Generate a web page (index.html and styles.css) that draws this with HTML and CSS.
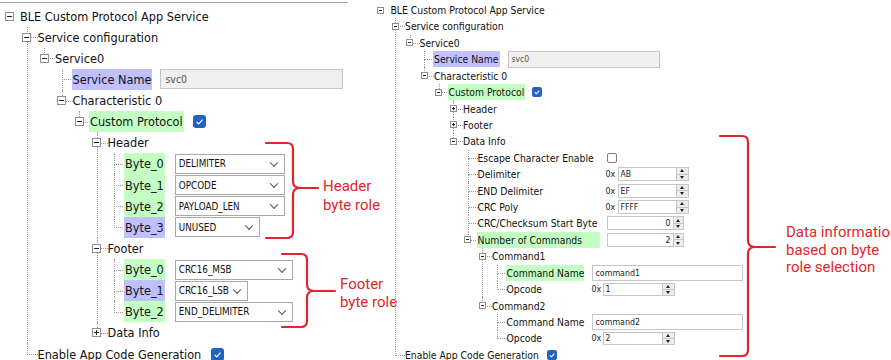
FILE: index.html
```html
<!DOCTYPE html>
<html lang="en">
<head>
<meta charset="utf-8">
<title>BLE Custom Protocol App Service</title>
<link rel="stylesheet" href="styles.css">
</head>
<body>
<main class="canvas">
  <section class="panel pl">
    <div class="topline"></div>
    <ul class="tree">
      <li>
        <div class="row"><span class="tg"></span><span class="lbl">BLE Custom Protocol App Service</span></div>
        <ul>
          <li>
            <div class="row"><span class="tg"></span><span class="lbl">Service configuration</span></div>
            <ul>
              <li>
                <div class="row"><span class="tg"></span><span class="lbl">Service0</span></div>
                <ul>
                  <li><div class="row leaf"><span class="lbl hl-p">Service Name</span><span class="ctl field ro sn">svc0</span></div></li>
                  <li>
                    <div class="row"><span class="tg"></span><span class="lbl">Characteristic 0</span></div>
                    <ul>
                      <li>
                        <div class="row"><span class="tg"></span><span class="lbl hl-g">Custom Protocol</span><svg class="ctl cb" viewBox="0 0 13 13"><rect x="0" y="0" width="13" height="13" rx="3" fill="#2163c0"/><path d="M3.6 6.9 L5.7 8.9 L9.5 4.6" fill="none" stroke="#fff" stroke-width="1.2"/></svg></div>
                        <ul>
                          <li>
                            <div class="row"><span class="tg"></span><span class="lbl">Header</span></div>
                            <ul>
                              <li><div class="row leaf"><span class="lbl hl-g">Byte_0</span><span class="ctl sel w110">DELIMITER</span></div></li>
                              <li><div class="row leaf"><span class="lbl hl-g">Byte_1</span><span class="ctl sel w110">OPCODE</span></div></li>
                              <li><div class="row leaf"><span class="lbl hl-g">Byte_2</span><span class="ctl sel w110">PAYLOAD_LEN</span></div></li>
                              <li><div class="row leaf"><span class="lbl hl-p">Byte_3</span><span class="ctl sel w85">UNUSED</span></div></li>
                            </ul>
                          </li>
                          <li>
                            <div class="row"><span class="tg"></span><span class="lbl">Footer</span></div>
                            <ul>
                              <li><div class="row leaf"><span class="lbl hl-g">Byte_0</span><span class="ctl sel w118">CRC16_MSB</span></div></li>
                              <li><div class="row leaf"><span class="lbl hl-p">Byte_1</span><span class="ctl sel w73">CRC16_LSB</span></div></li>
                              <li><div class="row leaf"><span class="lbl hl-g">Byte_2</span><span class="ctl sel w118">END_DELIMITER</span></div></li>
                            </ul>
                          </li>
                          <li><div class="row"><span class="tg plus"></span><span class="lbl">Data Info</span></div></li>
                        </ul>
                      </li>
                    </ul>
                  </li>
                </ul>
              </li>
            </ul>
          </li>
          <li><div class="row leaf"><span class="lbl">Enable App Code Generation</span><svg class="ctl cb" viewBox="0 0 13 13"><rect x="0" y="0" width="13" height="13" rx="3" fill="#2163c0"/><path d="M3.6 6.9 L5.7 8.9 L9.5 4.6" fill="none" stroke="#fff" stroke-width="1.2"/></svg></div></li>
        </ul>
      </li>
    </ul>
    <svg class="braces" width="370" height="360" viewBox="0 0 370 360">
      <path d="M266 143 H287 Q293 143 293 149 V181 Q293 188 300 188 H318 M300 188 Q293 188 293 195 V232 Q293 238 287 238 H266"/>
      <path d="M282 254 H301 Q307 254 307 260 V284 Q307 291 314 291 H335 M314 291 Q307 291 307 298 V321 Q307 327 301 327 H282"/>
    </svg>
    <p class="note n-head">Header<br>byte role</p>
    <p class="note n-foot">Footer<br>byte role</p>
  </section>

  <section class="panel pr">
    <ul class="tree">
      <li>
        <div class="row"><span class="tg"></span><span class="lbl">BLE Custom Protocol App Service</span></div>
        <ul>
          <li>
            <div class="row"><span class="tg"></span><span class="lbl">Service configuration</span></div>
            <ul>
              <li>
                <div class="row"><span class="tg"></span><span class="lbl">Service0</span></div>
                <ul>
                  <li><div class="row leaf"><span class="lbl hl-p">Service Name</span><span class="ctl field ro sn">svc0</span></div></li>
                  <li>
                    <div class="row"><span class="tg"></span><span class="lbl">Characteristic 0</span></div>
                    <ul>
                      <li>
                        <div class="row"><span class="tg"></span><span class="lbl hl-g">Custom Protocol</span><svg class="ctl cb" viewBox="0 0 13 13"><rect x="0" y="0" width="13" height="13" rx="3" fill="#2163c0"/><path d="M3.6 6.9 L5.7 8.9 L9.5 4.6" fill="none" stroke="#fff" stroke-width="1.4"/></svg></div>
                        <ul>
                          <li><div class="row"><span class="tg plus"></span><span class="lbl">Header</span></div></li>
                          <li><div class="row"><span class="tg plus"></span><span class="lbl">Footer</span></div></li>
                          <li>
                            <div class="row"><span class="tg"></span><span class="lbl">Data Info</span></div>
                            <ul>
                              <li><div class="row leaf"><span class="lbl c1">Escape Character Enable</span><span class="ctl cb off"></span></div></li>
                              <li><div class="row leaf"><span class="lbl c1">Delimiter</span><span class="ctl px">0x</span><span class="spinf hx"><span class="v">AB</span><span class="spin"><i></i><i></i></span></span></div></li>
                              <li><div class="row leaf"><span class="lbl c1">END Delimiter</span><span class="ctl px">0x</span><span class="spinf hx"><span class="v">EF</span><span class="spin"><i></i><i></i></span></span></div></li>
                              <li><div class="row leaf"><span class="lbl c1">CRC Poly</span><span class="ctl px">0x</span><span class="spinf hx"><span class="v">FFFF</span><span class="spin"><i></i><i></i></span></span></div></li>
                              <li><div class="row leaf"><span class="lbl c1">CRC/Checksum Start Byte</span><span class="ctl spinf num"><span class="v">0</span><span class="spin"><i></i><i></i></span></span></div></li>
                              <li>
                                <div class="row"><span class="tg"></span><span class="lbl c1 hl-g">Number of Commands</span><span class="ctl spinf num"><span class="v">2</span><span class="spin"><i></i><i></i></span></span></div>
                                <ul>
                                  <li>
                                    <div class="row"><span class="tg"></span><span class="lbl">Command1</span></div>
                                    <ul>
                                      <li><div class="row leaf"><span class="lbl c2 hl-g">Command Name</span><span class="ctl field cmd">command1</span></div></li>
                                      <li><div class="row leaf"><span class="lbl c2">Opcode</span><span class="ctl px">0x</span><span class="spinf op"><span class="v">1</span><span class="spin"><i></i><i></i></span></span></div></li>
                                    </ul>
                                  </li>
                                  <li>
                                    <div class="row"><span class="tg"></span><span class="lbl">Command2</span></div>
                                    <ul>
                                      <li><div class="row leaf"><span class="lbl c2">Command Name</span><span class="ctl field cmd">command2</span></div></li>
                                      <li><div class="row leaf"><span class="lbl c2">Opcode</span><span class="ctl px">0x</span><span class="spinf op"><span class="v">2</span><span class="spin"><i></i><i></i></span></span></div></li>
                                    </ul>
                                  </li>
                                </ul>
                              </li>
                            </ul>
                          </li>
                        </ul>
                      </li>
                    </ul>
                  </li>
                </ul>
              </li>
            </ul>
          </li>
          <li><div class="row leaf"><span class="lbl">Enable App Code Generation</span><svg class="ctl cb" viewBox="0 0 13 13"><rect x="0" y="0" width="13" height="13" rx="3" fill="#2163c0"/><path d="M3.6 6.9 L5.7 8.9 L9.5 4.6" fill="none" stroke="#fff" stroke-width="1.4"/></svg></div></li>
        </ul>
      </li>
    </ul>
    <svg class="braces" width="521" height="360" viewBox="0 0 521 360">
      <path d="M350 136 H372 Q378 136 378 142 V240 Q378 247 385 247 H405 M385 247 Q378 247 378 254 V350 Q378 356 372 356 H350"/>
    </svg>
    <p class="note n-data">Data information<br>based on byte<br>role selection</p>
  </section>
</main>
</body>
</html>
```

FILE: styles.css
```css
* { box-sizing: border-box; }
html, body { margin: 0; padding: 0; background: #fff; }
body { width: 891px; height: 360px; overflow: hidden; }

.canvas { display: flex; width: 891px; height: 360px; position: relative; overflow: hidden; }

.panel {
  position: relative;
  font-family: "DejaVu Sans Condensed", "DejaVu Sans", sans-serif;
  color: #111;
}
.pl {
  width: 370px; flex: none;
  --rh: 21.125px; --ind: 17.5px; --hx: 4.5px; --lo: 10px; --box: 9px; --gap: 9px;
  font-size: 12.6px;
}
.pr {
  flex: 1;
  --rh: 16.43px; --ind: 14.5px; --hx: 4px; --lo: 9px; --box: 7px; --gap: 8px;
  font-size: 10.3px;
}

.topline { height: 1px; width: 348px; background: #a0a0a0; margin-top: 2px; }

.tree, .tree ul { list-style: none; margin: 0; padding: 0; }
.tree ul { padding-left: var(--ind); }
.pl .tree { margin-top: 2.44px; padding-left: 4.5px; }
.pr .tree { margin-top: 1.8px; padding-left: 6.5px; }

.tree li { position: relative; }
.tree ul > li::before {
  content: ""; position: absolute;
  left: var(--hx); top: 0;
  height: calc(var(--rh) / 2); width: var(--lo);
  border-left: 1px dotted #9a9a9a; border-bottom: 1px dotted #9a9a9a;
}
.tree ul > li::after {
  content: ""; position: absolute;
  left: var(--hx); top: calc(var(--rh) / 2); bottom: 0;
  border-left: 1px dotted #9a9a9a;
}
.tree ul > li:last-child::after { display: none; }

.row {
  display: flex; align-items: center;
  height: var(--rh); white-space: nowrap;
  position: relative; z-index: 1;
}
.row.leaf { padding-left: calc(var(--hx) + var(--lo)); }

.tg {
  flex: none; position: relative;
  width: var(--box); height: var(--box);
  margin-left: calc(var(--hx) - var(--box) / 2);
  margin-right: calc(var(--lo) - var(--box) / 2);
  border: 1px solid #8e8e8e; background: #fff;
}
.tg::before {
  content: ""; position: absolute;
  left: 1px; right: 1px; top: calc((var(--box) - 3px) / 2); height: 1px;
  background: #222;
}
.tg.plus::after {
  content: ""; position: absolute;
  top: 1px; bottom: 1px; left: calc((var(--box) - 3px) / 2); width: 1px;
  background: #222;
}

.lbl { display: flex; align-items: center; height: 100%; padding: 0 1px; }
.hl-g { background: #c3ffc3; }
.hl-p { background: #c0c0ff; }
.c1 { width: 123px; }
.c2 { width: 78px; }

.ctl { flex: none; margin-left: var(--gap); }

/* checkboxes */
.cb { display: block; }
.pl .cb { width: 13px; height: 13px; }
.pr .cb { width: 10px; height: 10px; margin-left: 7px; }
.cb.off { border: 1px solid #7a7a7a; border-radius: 2px; background: #fff; }
.c1 + .ctl { margin-left: 7px; }

/* text fields */
.field {
  display: flex; align-items: center;
  border: 1px solid #c6c6c6; background: #fff; color: #222;
}
.field.ro { background: #f0f0f0; color: #555; }
.pl .sn { width: 183px; height: 20px; font-size: 10.5px; padding-left: 4px; margin-left: 8px; }
.pr .sn { width: 152px; height: 17px; font-size: 8.6px; padding-left: 3px; }
.cmd { width: 151px; height: 16px; font-size: 8.8px; padding-left: 3px; }

/* combo boxes */
.sel {
  position: relative; display: flex; align-items: center;
  height: 20px; margin-left: 10px; padding-left: 3px;
  border: 1px solid #a8a8a8; background: #fff;
  font-size: 9.8px; color: #111;
}
.sel::after {
  content: ""; position: absolute; right: 7px; top: 50%;
  width: 5px; height: 5px;
  border-right: 1px solid #555; border-bottom: 1px solid #555;
  transform: translateY(-70%) rotate(45deg);
}
.w110 { width: 110px; }
.w85 { width: 85px; }
.w118 { width: 118px; }
.w73 { width: 73px; }

/* spinners */
.px { width: 11px; font-size: 8.8px; color: #222; }
.c1 + .px { margin-left: 6px; }
.spinf {
  flex: none; display: flex; align-items: stretch;
  border: 1px solid #c6c6c6; background: #fff;
  font-size: 8.6px; color: #222;
}
.spinf .v { flex: 1; display: flex; align-items: center; padding: 0 2px; }
.spinf.hx { width: 71px; height: 14px; margin-left: 1px; }
.spinf.op { width: 72px; height: 13px; margin-left: 0; }
.spinf.num { width: 77px; height: 14px; }
.spinf.num .v { justify-content: flex-end; }
.spin {
  flex: none; width: 12px; display: flex; flex-direction: column;
  border-left: 1px solid #c6c6c6; background: #ececec;
}
.spinf.num .spin { width: 10px; }
.spin i { flex: 1; display: flex; align-items: center; justify-content: center; }
.spin i + i { border-top: 1px solid #c6c6c6; }
.spin i::before {
  content: ""; width: 0; height: 0;
  border-left: 2px solid transparent; border-right: 2px solid transparent;
  border-bottom: 3px solid #222;
}
.spin i + i::before { border-bottom: 0; border-top: 3px solid #222; }

/* annotations */
.braces { position: absolute; left: 0; top: 0; overflow: visible; pointer-events: none; }
.braces path { fill: none; stroke: #e0262b; stroke-width: 2.2; stroke-linejoin: round; stroke-linecap: round; }
.note {
  position: absolute; margin: 0;
  font-family: Roboto, "Liberation Sans", sans-serif;
  color: #e0262b; white-space: nowrap;
}
.n-head { left: 323px; top: 177px; font-size: 15px; line-height: 19px; }
.n-foot { left: 340px; top: 275px; font-size: 15px; line-height: 18px; }
.n-data { left: 416px; top: 224px; font-size: 15px; line-height: 17.5px; }
```
